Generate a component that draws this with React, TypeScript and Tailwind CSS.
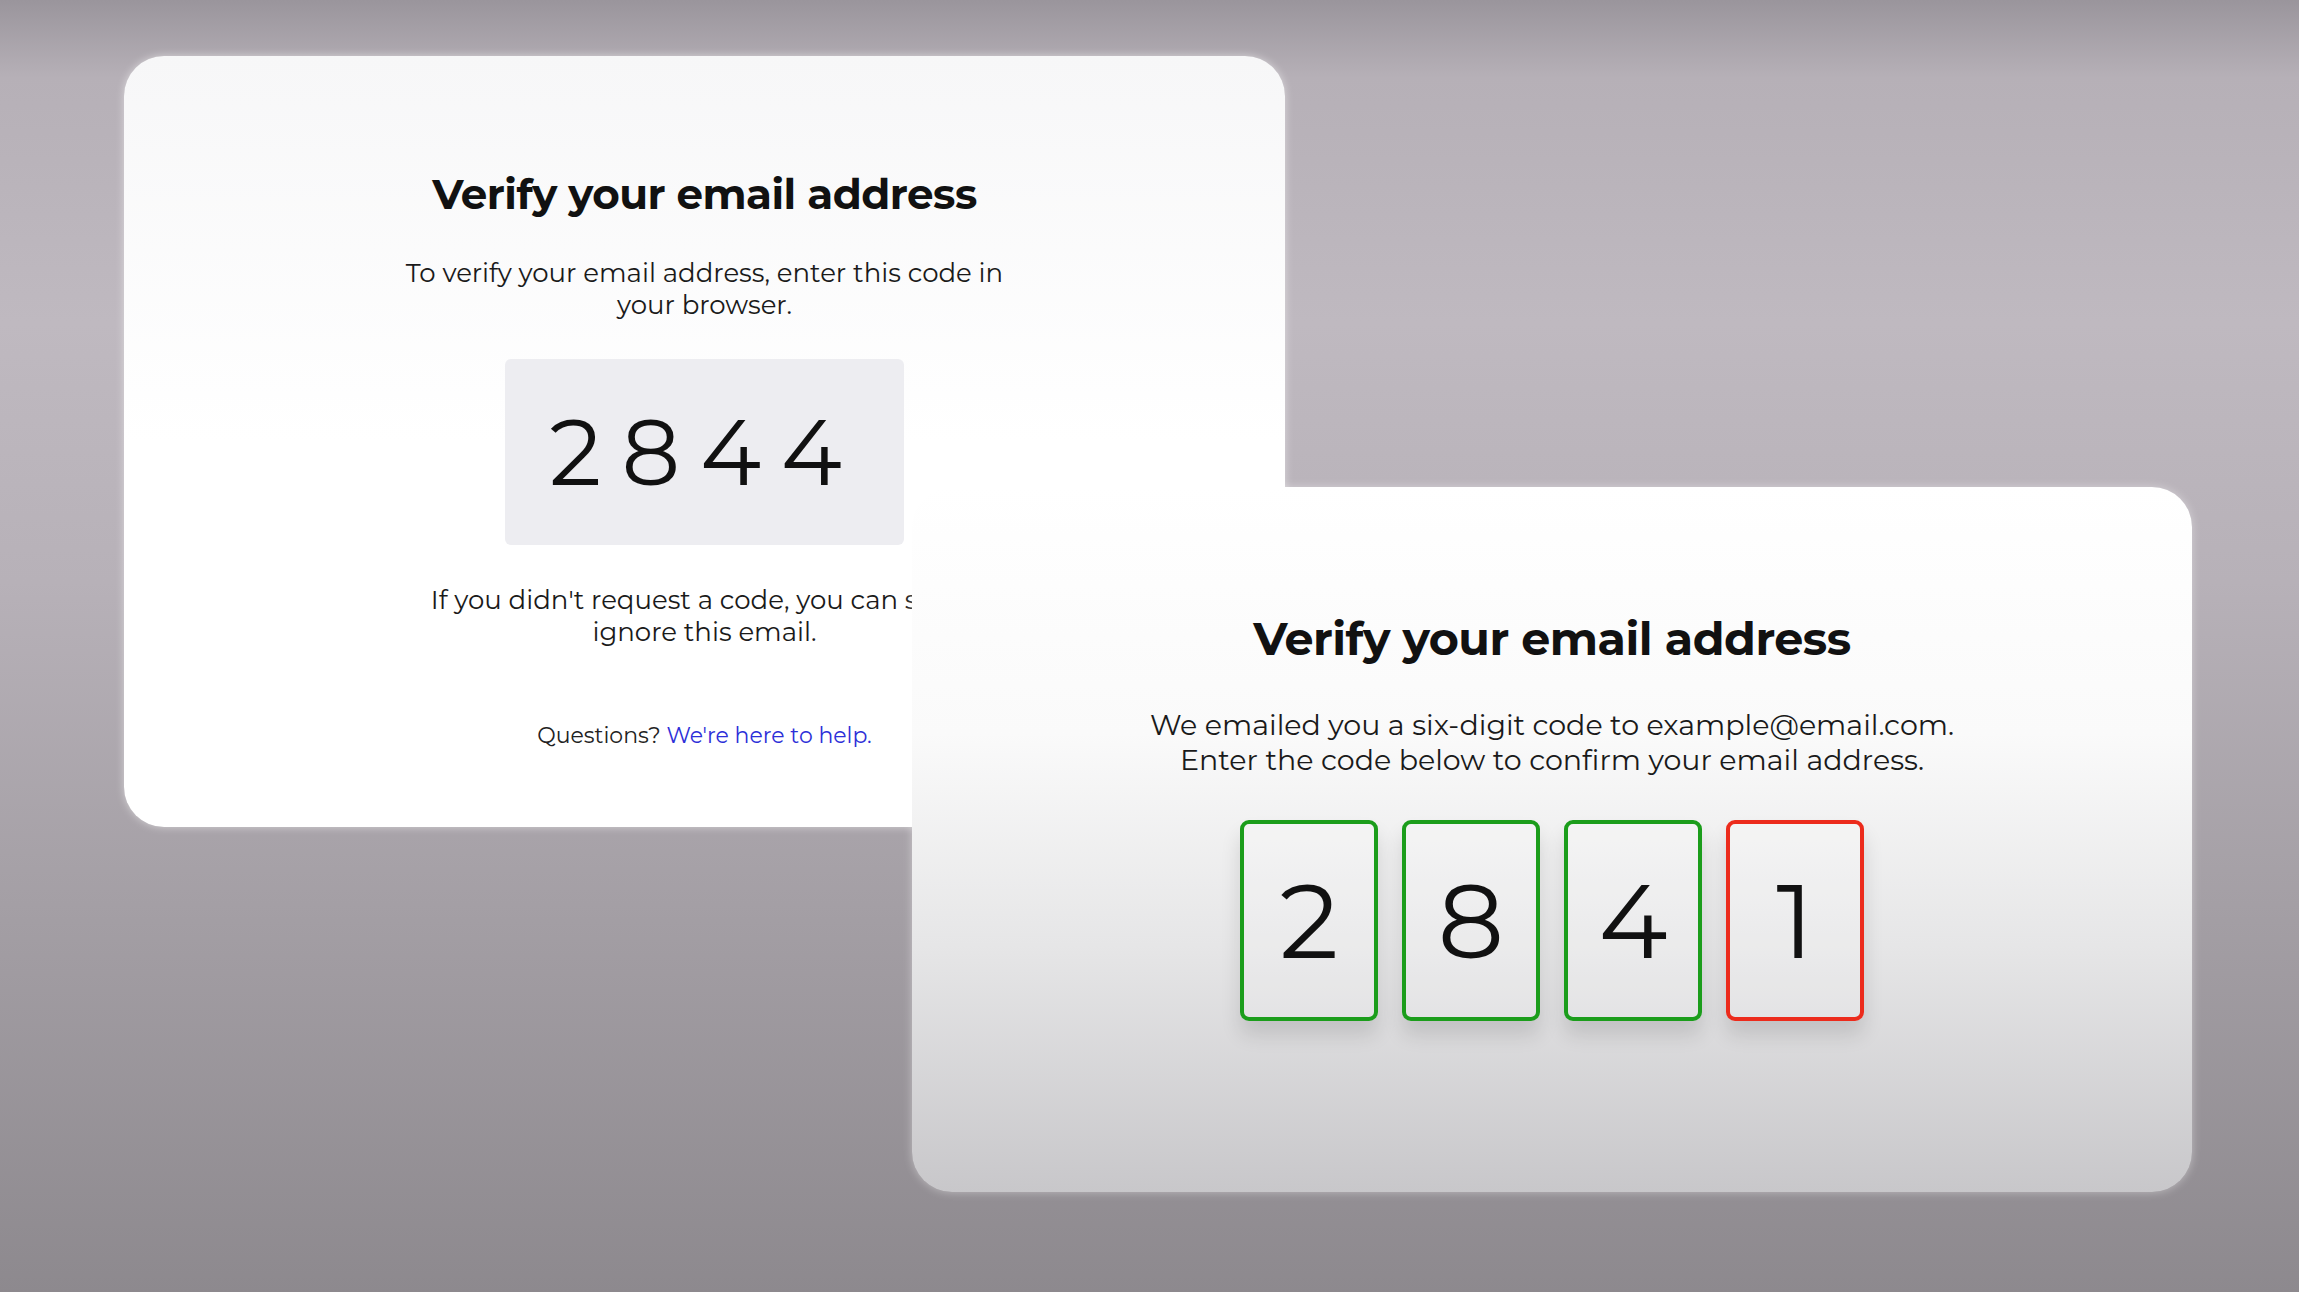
import React from "react"

const FONT = "font-['Montserrat','DejaVu_Sans','Noto_Sans',sans-serif]"

const digits = [
  { value: "2", ok: true },
  { value: "8", ok: true },
  { value: "4", ok: true },
  { value: "1", ok: false },
]

function EmailCard() {
  return (
    <div className="ml-[124px] pt-[56px]">
      <div className="flex h-[771px] w-[1161px] flex-col items-center rounded-[40px] bg-gradient-to-b from-[#f7f7f8] via-white to-white text-[#1a1a1a] shadow-[0_0_8px_rgba(255,255,255,0.5)]">
        <h1 className="mt-[113px] text-[42px] font-bold leading-[50px] tracking-[-0.5px] text-[#111]">
          Verify your email address
        </h1>
        <p className="mt-[38px] text-center text-[26px] leading-[32px]">
          To verify your email address, enter this code in
          <br />
          your browser.
        </p>
        <div className="mt-[38px] flex h-[186px] w-[399px] items-center justify-center rounded-md bg-[#ededf1]">
          <span className="pl-[2px] text-[92px] font-normal leading-none tracking-[20px] text-[#111]">
            2844
          </span>
        </div>
        <p className="mt-[39px] text-center text-[26px] leading-[32px]">
          If you didn't request a code, you can safely
          <br />
          ignore this email.
        </p>
        <p className="mt-[73px] text-[22px] leading-[30px] text-[#222]">
          Questions? <a className="text-[#2d2fd8]">We're here to help.</a>
        </p>
      </div>
    </div>
  )
}

function ConfirmCard() {
  return (
    <div className="absolute left-[912px] top-[487px] flex h-[705px] w-[1280px] flex-col items-center rounded-[40px] bg-[linear-gradient(to_bottom,#ffffff_0%,#fafafa_35%,#e6e6e7_65%,#c8c7ca_100%)] text-[#1a1a1a] shadow-[0_0_10px_rgba(255,255,255,0.4)]">
      <h2 className="mt-[125px] text-[46px] font-bold leading-[54px] tracking-[-0.5px] text-[#111]">
        Verify your email address
      </h2>
      <p className="mt-[41px] text-center text-[28.5px] leading-[35px]">
        We emailed you a six-digit code to example@email.com.
        <br />
        Enter the code below to confirm your email address.
      </p>
      <div className="mt-[43px] flex gap-[24px]">
        {digits.map((d, i) => (
          <div
            key={i}
            className={`flex h-[201px] w-[138px] items-center justify-center rounded-[9px] border-[4px] bg-white/20 shadow-[0_14px_20px_rgba(0,0,0,0.12)] ${
              d.ok ? "border-[#1b9d1b]" : "border-[#ec2b1c]"
            }`}
          >
            <span className="text-[104px] font-normal leading-none text-[#111]">{d.value}</span>
          </div>
        ))}
      </div>
    </div>
  )
}

export default function App() {
  return (
    <div
      className={`relative h-[1292px] w-[2299px] overflow-hidden bg-[linear-gradient(to_bottom,#9a959c_0%,#b6b0b7_6%,#bfb9c0_25%,#b7b1b8_45%,#a49fa5_70%,#8d898e_100%)] ${FONT}`}
    >
      <EmailCard />
      <ConfirmCard />
    </div>
  )
}
